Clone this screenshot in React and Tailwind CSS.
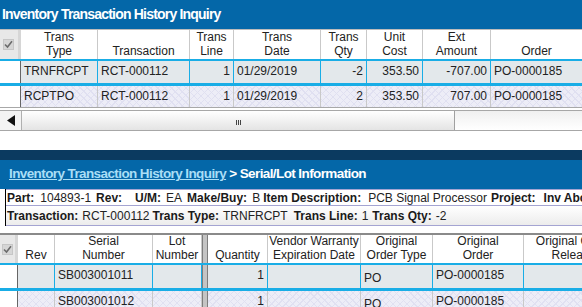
import React from 'react'

const cyan = 'border-[#19ade6]'
const hatch = "bg-[#ededf7] bg-[image:repeating-linear-gradient(45deg,#e0e0f1_0_1px,transparent_1px_5px),repeating-linear-gradient(-45deg,#e0e0f1_0_1px,transparent_1px_5px)]"
const sel = 'bg-[#e3e8eb]'

function Check() {
  return (
    <div className="w-[11px] h-[11px] bg-[#d6d6d6] border border-[#c6c6c6] flex items-center justify-center">
      <svg width="9" height="9" viewBox="0 0 9 9">
        <path d="M1 4.5 L3.5 7 L8 1.2" fill="none" stroke="#6b6b6b" strokeWidth="1.6" />
      </svg>
    </div>
  )
}

const cols1 = 'grid grid-cols-[21px_77px_92px_44px_87px_46px_56px_68px_92px]'
const head1 = [['Trans', 'Type'], ['Transaction'], ['Trans', 'Line'], ['Trans', 'Date'], ['Trans', 'Qty'], ['Unit', 'Cost'], ['Ext', 'Amount'], ['Order']]
const rows1 = [
  ['TRNFRCPT', 'RCT-000112', '1', '01/29/2019', '-2', '353.50', '-707.00', 'PO-0000185'],
  ['RCPTPO', 'RCT-000112', '1', '01/29/2019', '2', '353.50', '707.00', 'PO-0000185'],
]
const align1 = ['text-left', 'text-left', 'text-right', 'text-left', 'text-right', 'text-right', 'text-right', 'text-left']

const cols2 = 'grid grid-cols-[18px_37px_98px_49px_6px_60px_93px_72px_91px_100px] w-[624px]'
const head2 = [['Rev'], ['Serial', 'Number'], ['Lot', 'Number'], null, ['Quantity'], ['Vendor Warranty', 'Expiration Date'], ['Original', 'Order Type'], ['Original', 'Order'], ['Original Order', 'Release']]
const rows2 = [
  ['', 'SB003001011', '', null, '1', '', 'PO', 'PO-0000185', ''],
  ['', 'SB003001012', '', null, '1', '', 'PO', 'PO-0000185', ''],
]
const align2 = ['text-left', 'text-left', 'text-left', '', 'text-right', 'text-left', 'text-left', 'text-left', 'text-left']

function HeadCell({ lines }) {
  return (
    <div className="flex flex-col justify-end items-center text-center leading-[14px] pb-[1px] border-r border-[#c9c9c9] text-[#222] overflow-hidden whitespace-nowrap">
      {lines.map((l) => <div key={l}>{l}</div>)}
    </div>
  )
}

function Info({ label, value, gap = 'mr-[5px]', vgap = 'ml-[4px]' }) {
  return (
    <span className={`${gap} whitespace-pre flex shrink-0`}>
      <b className="text-[#1a1a1a]">{label}</b>
      <span className={vgap}>{value}</span>
    </span>
  )
}

export default function App() {
  return (
    <div className="w-[582px] h-[307px] overflow-hidden bg-white text-[12px] text-[#222] font-['Liberation_Sans',Arial,sans-serif]">
      <div className="h-[29px] bg-[#0467a8] text-white font-bold text-[14px] tracking-[-0.8px] pl-[2px] flex items-center">
        Inventory Transaction History Inquiry
      </div>
      <div className="w-[583px] border-t border-[#bcbcbc]">
        <div className={`${cols1} h-[29px]`}>
          <div className="bg-[#e8e8e8] border-r-[3px] border-[#d6d6d6] flex items-center justify-center pr-[1px]"><Check /></div>
          {head1.map((h, i) => <HeadCell key={i} lines={h} />)}
        </div>
        {rows1.map((r, ri) => (
          <div key={ri} className={`${cols1} ${ri === 0 ? `h-[27px] border-y-2 border-b-[3px] ${cyan}` : 'h-[22px] border-b border-[#a8a8a8]'}`}>
            <div className="bg-white border-r border-[#666]" />
            {r.map((c, i) => (
              <div key={i} className={`${ri === 0 ? `${sel} border-r ${cyan}` : `${hatch} border-r border-[#c9c9c9]`} ${align1[i]} px-[3px] leading-[21px] whitespace-nowrap overflow-hidden`}>
                {c}
              </div>
            ))}
          </div>
        ))}
      </div>
      <div className="mt-[2px] h-[21px] flex border-y border-[#a7a7a7] bg-[#f3f3f3]">
        <div className="w-[22px] border-r border-[#b0b0b0] flex items-center justify-center">
          <svg width="8" height="11" viewBox="0 0 8 11"><path d="M8 0 L0 5.5 L8 11 Z" fill="#111" /></svg>
        </div>
        <div className="w-[433px] border-r border-[#a0a0a0] bg-gradient-to-b from-white to-[#e4e4e4] flex items-center justify-center gap-[1px] pt-[3px]">
          <span className="w-px h-[5px] bg-[#444]" />
          <span className="w-px h-[5px] bg-[#444]" />
          <span className="w-px h-[5px] bg-[#444]" />
        </div>
        <div className="flex-1 bg-gradient-to-b from-[#f0f0f0] to-white" />
      </div>

      <div className="mt-[19px] h-[10px] bg-[#0b3a60]" />
      <div className="h-[29px] bg-[#0467a8] text-white font-bold text-[13.5px] tracking-[-0.6px] pl-[9px] flex items-center">
        <span className="underline text-[#a9def6]">Inventory Transaction History Inquiry</span>
        <span className="whitespace-pre"> &gt; Serial/Lot Information</span>
      </div>
      <div className="ml-[5px] border-l border-black whitespace-nowrap">
        <div className="h-[17px] border-y border-[#a4a4d2] pl-[1px] flex items-center">
          <Info label="Part:" value="104893-1" gap="mr-[5px]" vgap="ml-[6px]" />
          <Info label="Rev:" value="" gap="mr-[13px]" vgap="ml-0" />
          <Info label="U/M:" value="EA" gap="mr-[5px]" vgap="ml-[5px]" />
          <Info label="Make/Buy:" value="B" gap="mr-[3px]" vgap="ml-[5px]" />
          <Info label="Item Description:" value="PCB Signal Processor" gap="mr-[4px]" vgap="ml-[7px]" />
          <Info label="Project:" value="" gap="mr-[8px]" vgap="ml-0" />
          <Info label="Inv Abc Code:" value="" />
        </div>
        <div className="h-[20px] border-b border-[#a4a4d2] pl-[1px] flex items-center bg-gradient-to-b from-white to-[#ececec]">
          <Info label="Transaction:" value="RCT-000112" gap="mr-[3px]" vgap="ml-[4px]" />
          <Info label="Trans Type:" value="TRNFRCPT" gap="mr-[6px]" vgap="ml-[4px]" />
          <Info label="Trans Line:" value="1" gap="mr-[4px]" vgap="ml-[4px]" />
          <Info label="Trans Qty:" value="-2" vgap="ml-[4px]" />
        </div>
      </div>

      <div className="mt-[7px] border-t-2 border-[#8a8a8a]">
        <div className={`${cols2} h-[28px]`}>
          <div className="bg-[#e8e8e8] border-r-[3px] border-[#d6d6d6] flex items-center justify-center"><Check /></div>
          {head2.map((h, i) =>
            h ? <HeadCell key={i} lines={h} /> : <div key={i} className="bg-[#c4c4c4] border-x border-[#7d7d7d]" />
          )}
        </div>
        {rows2.map((r, ri) => (
          <div key={ri} className={`${cols2} ${ri === 0 ? `h-[28px] border-y-2 border-b-[3px] ${cyan}` : 'h-[24px]'}`}>
            <div className="bg-white border-r border-[#666]" />
            {r.map((c, i) =>
              c === null ? (
                <div key={i} className="bg-[#c4c4c4] border-x border-[#7d7d7d]" />
              ) : (
                <div key={i} className={`${ri === 0 ? `${sel} border-r ${cyan}` : `${hatch} border-r border-[#c9c9c9]`} ${align2[i]} ${c === 'PO' ? 'pt-[3px]' : ''} px-[3px] leading-[21px] whitespace-nowrap overflow-hidden`}>
                  {c}
                </div>
              )
            )}
          </div>
        ))}
      </div>
    </div>
  )
}
